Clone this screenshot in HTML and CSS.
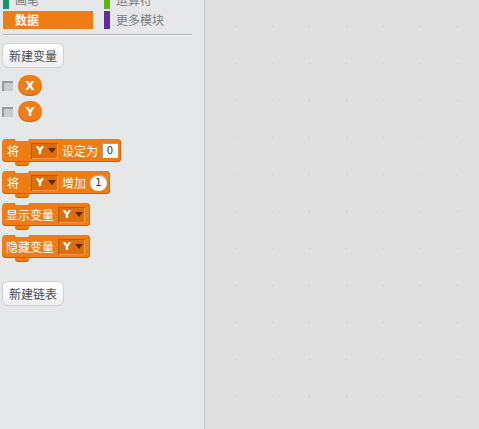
FILE: index.html
```html
<!DOCTYPE html>
<html lang="zh">
<head>
<meta charset="utf-8">
<link rel="stylesheet" href="styles.css">
</head>
<body>
<div class="app">
  <aside class="palette">
    <div class="cats">
      <div class="cat"><span class="bar pen"></span>画笔</div>
      <div class="cat"><span class="bar ops"></span>运算符</div>
      <div class="cat active"><span class="bar data"></span>数据</div>
      <div class="cat"><span class="bar more"></span>更多模块</div>
    </div>
    <div class="sep"></div>
    <div class="blocks">
      <button class="btn">新建变量</button>
      <div class="var var-first"><span class="chk"></span><span class="rep">X</span></div>
      <div class="var"><span class="chk"></span><span class="rep">Y</span></div>

      <div class="block b-first"><span class="lbl lead">将</span><span class="dd">Y<i class="tri"></i></span><span class="lbl">设定为</span><span class="num">0</span></div>
      <div class="block"><span class="lbl lead">将</span><span class="dd">Y<i class="tri"></i></span><span class="lbl">增加</span><span class="oval">1</span></div>
      <div class="block"><span class="lbl">显示变量</span><span class="dd end">Y<i class="tri"></i></span></div>
      <div class="block"><span class="lbl">隐藏变量</span><span class="dd end">Y<i class="tri"></i></span></div>

      <button class="btn btn-list">新建链表</button>
    </div>
  </aside>
  <main class="scripts"></main>
</div>
</body>
</html>
```

FILE: styles.css
```css
* { box-sizing: border-box; }
html, body { margin: 0; padding: 0; height: 100%; }
body {
  font-family: "Noto Sans CJK SC", "Liberation Sans", sans-serif;
  overflow: hidden;
}
.app {
  display: flex;
  width: 479px;
  height: 429px;
}
.palette {
  width: 205px;
  flex: none;
  background: #e6e7e8;
  border-right: 1px solid #c4c5c6;
  overflow: hidden;
}
.scripts {
  flex: 1;
  background-color: #e0e0e1;
  background-image: radial-gradient(circle, #d8d8d9 1px, transparent 1.5px);
  background-size: 37px 37px;
  background-position: 12px 8px;
}
.cats {
  display: grid;
  grid-template-columns: 90px 90px;
  column-gap: 11px;
  row-gap: 2px;
  margin: -9px 0 0 3px;
}
.cat {
  height: 18px;
  display: flex;
  align-items: center;
  font-size: 12px;
  color: #7d7d7d;
  line-height: 1;
}
.cat .bar {
  width: 6px;
  height: 18px;
  margin-right: 6px;
}
.bar.pen { background: #0e9a6c; }
.bar.ops { background: #5cb712; }
.bar.data { background: #ee7d16; }
.bar.more { background: #632d99; }
.cat.active {
  background: #ee7d16;
  color: #fff;
  font-weight: bold;
}
.sep {
  margin: 5px 0 0 3px;
  width: 189px;
  height: 2px;
  border-top: 1px solid #b4b5b6;
  border-bottom: 1px solid #f4f4f4;
}
.blocks {
  display: flex;
  flex-direction: column;
  align-items: flex-start;
  padding-left: 2px;
}
.btn {
  margin-top: 7px;
  width: 62px;
  height: 25px;
  padding: 0;
  border: 1px solid #cfd0d1;
  border-radius: 6px;
  background: linear-gradient(#ffffff, #eeeeef);
  font-family: inherit;
  font-size: 12px;
  color: #4d4d4d;
  line-height: 1;
}
.btn-list { margin-top: 23px; }
.var {
  display: flex;
  align-items: center;
  height: 21px;
  margin-top: 5px;
}
.var-first { margin-top: 7px; }
.chk {
  width: 11px;
  height: 10px;
  margin-right: 5px;
  background: #cbcbcc;
  border-top: 2px solid #9a9a9a;
  border-left: 2px solid #9a9a9a;
}
.rep {
  width: 24px;
  height: 21px;
  border-radius: 11px;
  background: #ee7d16;
  box-shadow: inset 0 -1px 0 #c8620d;
  color: #fff;
  font-family: "DejaVu Sans", sans-serif;
  font-weight: bold;
  font-size: 12px;
  display: flex;
  align-items: center;
  justify-content: center;
}
.block {
  position: relative;
  display: flex;
  align-items: center;
  height: 23px;
  margin-top: 9px;
  padding: 0 3px 0 4px;
  background: #ee7d16;
  border-radius: 4px;
  box-shadow: inset 0 -1px 0 #c0600c, inset -1px 0 0 #d06a10;
  color: #fff;
  font-size: 12px;
  line-height: 1;
}
.block.b-first { margin-top: 17px; }
.block::before {
  content: "";
  position: absolute;
  top: 0;
  left: 13px;
  width: 14px;
  height: 2px;
  background: #e6e7e8;
  border-radius: 0 0 3px 3px;
}
.block::after {
  content: "";
  position: absolute;
  bottom: -3px;
  left: 13px;
  width: 14px;
  height: 3px;
  background: #ee7d16;
  border-radius: 0 0 3px 3px;
  box-shadow: 0 1px 0 #c0600c;
}
.lbl { margin-right: 4px; }
.lbl.lead { margin-right: 12px; margin-left: 1px; }
.dd {
  display: inline-flex;
  align-items: center;
  height: 16px;
  width: 27px;
  padding-left: 5px;
  background: #dc6d0b;
  box-shadow: inset 1px 1px 0 #b85a08, inset -1px -1px 0 #f59a4a;
  font-family: "DejaVu Sans", sans-serif;
  font-weight: bold;
  font-size: 11px;
  color: #fff;
  margin-right: 4px;
}
.dd.end { margin-right: 2px; }
.tri {
  width: 0;
  height: 0;
  margin-left: 4px;
  border-left: 4px solid transparent;
  border-right: 4px solid transparent;
  border-top: 5px solid #5a2a00;
}
.num {
  width: 16px;
  height: 15px;
  background: #fff;
  box-shadow: inset 1px 1px 0 #a0a0a0;
  color: #333;
  font-family: "DejaVu Sans", sans-serif;
  font-size: 10px;
  display: flex;
  align-items: center;
  justify-content: center;
}
.oval {
  width: 17px;
  height: 16px;
  border-radius: 8px;
  background: #fff;
  box-shadow: inset 0 1px 0 #a0a0a0;
  color: #333;
  font-family: "DejaVu Sans", sans-serif;
  font-size: 10px;
  display: flex;
  align-items: center;
  justify-content: center;
}
```
